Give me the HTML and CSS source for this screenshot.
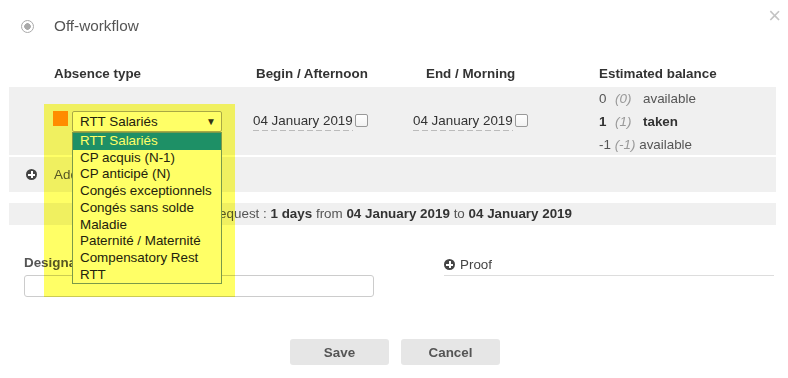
FILE: index.html
```html
<!DOCTYPE html>
<html lang="en">
<head>
    <meta charset="UTF-8">
    <meta name="viewport" content="width=device-width, initial-scale=1.0">
    <title>Absence request</title>
    <link rel="stylesheet" href="styles.css">
</head>
<body>

    <div class="modal">
        <button class="close" type="button">&times;</button>

        <div class="workflow"><span class="radio"></span>Off-workflow</div>

        <div class="grid head">
            <div class="h-type">Absence type</div>
            <div class="h-begin">Begin / Afternoon</div>
            <div class="h-end">End / Morning</div>
            <div>Estimated balance</div>
        </div>

        <div class="grid line">
            <div class="type">
                <span class="swatch"></span>
                <div class="select">
                    RTT Salariés <span class="caret">&#9660;</span>
                    <ul class="options">
                        <li class="active">RTT Salariés</li>
                        <li>CP acquis (N-1)</li>
                        <li>CP anticipé (N)</li>
                        <li>Congés exceptionnels</li>
                        <li>Congés sans solde</li>
                        <li>Maladie</li>
                        <li>Paternité / Maternité</li>
                        <li>Compensatory Rest</li>
                        <li>RTT</li>
                    </ul>
                </div>
            </div>
            <div class="date"><span class="date-val">04 January 2019</span><input type="checkbox"></div>
            <div class="date"><span class="date-val">04 January 2019</span><input type="checkbox"></div>
            <div class="balance">
                <div><span class="n">0</span><span class="p">(0)</span>available</div>
                <div class="taken"><span class="n">1</span><span class="p">(1)</span>taken</div>
                <div class="tight">-1 <span class="p">(-1)</span> available</div>
            </div>
        </div>

        <div class="add-row"><span class="plus"></span>Add a line</div>

        <div class="summary">Total for this request : <b>1 days</b> from <b>04 January 2019</b> to <b>04 January 2019</b></div>

        <div class="extra">
            <div class="designation">
                <label for="designation">Designation</label>
                <input type="text" id="designation">
            </div>
            <div class="proof"><span class="plus"></span>Proof</div>
        </div>

        <div class="actions">
            <button type="button">Save</button>
            <button type="button">Cancel</button>
        </div>

        <!-- highlighter mark drawn over the screenshot -->
        <div class="highlight"></div>
    </div>

</body>
</html>
```

FILE: styles.css
```css
body {
    margin: 0;
    font-family: "Liberation Sans", Arial, sans-serif;
    font-size: 13.4px;
    color: #555;
}

.modal {
    position: relative;
    padding: 0 12px 0 9px;
    height: 378px;
    box-sizing: border-box;
}

.close {
    position: absolute;
    top: 3px;
    right: 7px;
    border: none;
    background: none;
    color: #c4c4c4;
    font-family: "Liberation Sans", Arial, sans-serif;
    font-size: 22px;
    padding: 0;
    cursor: pointer;
}

.workflow {
    display: flex;
    align-items: center;
    height: 50px;
    padding: 2px 0 0 12px;
    box-sizing: border-box;
    font-size: 15.3px;
}

.radio {
    width: 11px;
    height: 11px;
    border: 1px solid #aaa;
    border-radius: 50%;
    margin-right: 20px;
    background: radial-gradient(circle, #aaa 0 3px, #fff 3.6px);
}

.grid {
    display: grid;
    grid-template-columns: 200px 160px 186px 1fr;
    padding-left: 44px;
}

.head {
    height: 37px;
    box-sizing: border-box;
    padding-top: 16px;
    line-height: 16px;
    font-weight: bold;
    color: #333;
}

.h-type { padding-left: 1px; }
.h-begin { padding-left: 3px; }
.h-end { padding-left: 13px; }

.line {
    background-color: #f0f0f0;
    height: 68px;
    align-items: center;
}

.type {
    display: flex;
    align-self: start;
    padding-top: 24px;
}

.swatch {
    width: 15px;
    height: 15px;
    background-color: #ff8c00;
    margin-right: 4px;
}

.select {
    position: relative;
    width: 150px;
    height: 21px;
    box-sizing: border-box;
    border: 1px solid #a9a9a9;
    border-radius: 2px;
    background: #fff;
    padding-left: 7px;
    line-height: 19px;
    color: #222;
}

.caret {
    position: absolute;
    right: 5px;
    top: 0;
    font-size: 10px;
    color: #333;
}

.options {
    position: absolute;
    top: 20px;
    left: -1px;
    width: 150px;
    box-sizing: border-box;
    margin: 0;
    padding: 0;
    list-style: none;
    border: 1px solid #7a9ab5;
    background: #fff;
    z-index: 2;
}

.options li {
    padding-left: 7px;
    line-height: 16.7px;
    white-space: nowrap;
}

.options li.active {
    background-color: #1e90ff;
    color: #fff;
}

.date {
    display: flex;
    align-items: flex-start;
    color: #333;
}

.date-val {
    padding-bottom: 3px;
    background-image: repeating-linear-gradient(to right, #bbb 0 6px, transparent 6px 9px);
    background-size: 100% 1px;
    background-position: left bottom;
    background-repeat: no-repeat;
}

.date input {
    appearance: none;
    width: 13px;
    height: 13px;
    margin: 1px 0 0 2px;
    border: 1px solid #999;
    border-radius: 2px;
    background: linear-gradient(#fff, #f2f2f2);
}

.balance {
    line-height: 23px;
}

.balance .n {
    display: inline-block;
    min-width: 16px;
}

.balance .p {
    display: inline-block;
    min-width: 28px;
    font-style: italic;
    color: #999;
    font-weight: normal;
}

.balance .tight .p {
    min-width: 0;
}

.taken {
    font-weight: bold;
    color: #333;
}

.add-row {
    display: flex;
    align-items: center;
    height: 35px;
    margin-top: 2px;
    padding-left: 17px;
    background-color: #f0f0f0;
}

.plus {
    position: relative;
    width: 11px;
    height: 11px;
    border-radius: 50%;
    background-color: #444;
    margin-right: 17px;
    flex-shrink: 0;
}

.plus::before,
.plus::after {
    content: "";
    position: absolute;
    background: #fff;
}

.plus::before {
    left: 2px;
    top: 4.5px;
    width: 7px;
    height: 2px;
}

.plus::after {
    left: 4.5px;
    top: 2px;
    width: 2px;
    height: 7px;
}

.summary {
    margin-top: 11px;
    height: 22px;
    line-height: 22px;
    background-color: #f0f0f0;
    text-align: right;
    padding-right: 204px;
    color: #555;
}

.summary b {
    color: #333;
}

.extra {
    display: grid;
    grid-template-columns: 350px 330px;
    column-gap: 70px;
    padding-left: 15px;
    margin-top: 30px;
}

.designation label {
    display: block;
    font-weight: bold;
    line-height: 16px;
    margin-bottom: 4px;
}

.designation input {
    display: block;
    width: 100%;
    height: 22px;
    box-sizing: border-box;
    border: 1px solid #ccc;
    border-radius: 3px;
}

.proof {
    display: flex;
    align-items: center;
    height: 19px;
    align-self: start;
    border-bottom: 1px solid #ddd;
    padding-bottom: 1px;
    color: #444;
}

.proof .plus {
    margin-right: 5px;
}

.actions {
    display: flex;
    justify-content: center;
    gap: 12px;
    margin-top: 42px;
    padding-left: 5px;
}

.actions button {
    width: 99px;
    height: 26px;
    border: none;
    border-radius: 3px;
    background-color: #e6e6e6;
    color: #555;
    font-family: "Liberation Sans", Arial, sans-serif;
    font-size: 13.4px;
    font-weight: bold;
    cursor: pointer;
}

.highlight {
    position: absolute;
    left: 44px;
    top: 104px;
    width: 191px;
    height: 193px;
    background: rgba(255, 255, 0, 0.6);
    mix-blend-mode: multiply;
    pointer-events: none;
    z-index: 3;
}
```
